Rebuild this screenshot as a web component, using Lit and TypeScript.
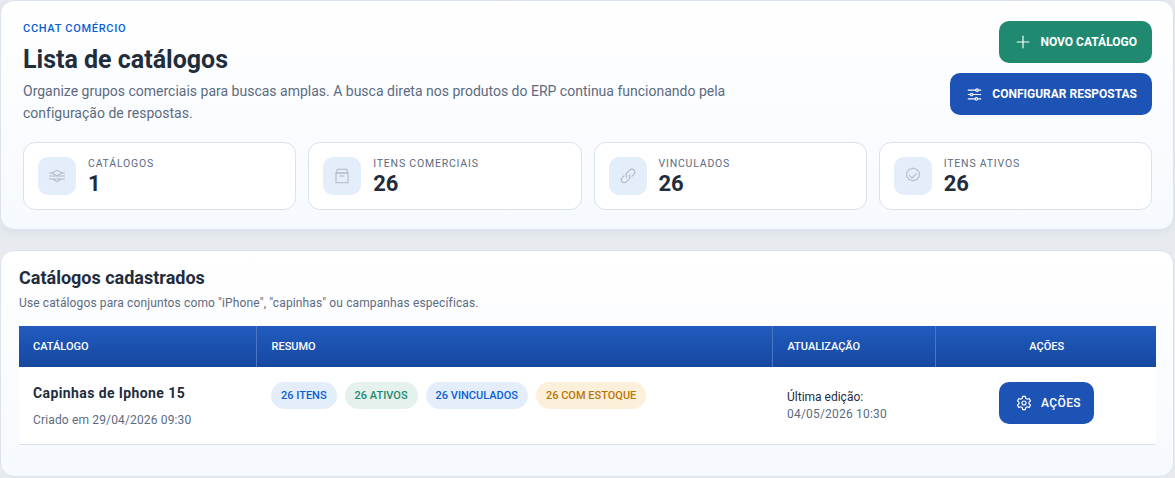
import { LitElement, html, css, svg } from "lit";
import { customElement } from "lit/decorators.js";

const ic = (size: number, w: number, body: unknown) => html`<svg width=${size} height=${size} viewBox="0 0 24 24" fill="none" stroke="currentColor" stroke-width=${w} stroke-linecap="round" stroke-linejoin="round">${body}</svg>`;

const plus = svg`<path d="M12 2v20M2 12h20"/>`;
const sliders = svg`<path d="M2 5h12M18 5h4M2 12h3M10 12h12M2 19h11M17 19h5"/><circle cx="16" cy="5" r="2"/><circle cx="7.500" cy="12" r="2"/><circle cx="15" cy="19" r="2"/>`;
const layers = svg`<path d="M12 4.500 5 8l7 3.500L19 8l-7-3.500Z"/><path d="M2 8h3M19 8h3M2 12h20M2 16h20M6 16l6 3.500 6-3.500"/>`;
const box = svg`<path d="M4 8h16v13H4z"/><path d="M6 3h12l2 5H4z"/><path d="M9.500 12h5"/>`;
const link = svg`<path d="M10.500 13.500a4 4 0 0 1 0-5.600l3.700-3.700a4 4 0 0 1 5.700 5.700l-2.400 2.300"/><path d="M13.500 10.500a4 4 0 0 1 0 5.600l-3.700 3.700a4 4 0 0 1-5.700-5.700l2.400-2.300"/>`;
const check = svg`<path d="M12 1.500c1 0 1.500 1 2.400 1.200 1 .2 2-.2 2.800.4.800.6.700 1.600 1.300 2.300.6.800 1.700 1 2 2 .3.900-.4 1.700-.4 2.600s.700 1.700.4 2.600c-.3 1-1.400 1.200-2 2-.6.700-.5 1.700-1.300 2.300-.8.600-1.800.2-2.800.4-.9.200-1.400 1.200-2.400 1.200s-1.500-1-2.400-1.200c-1-.2-2 .2-2.800-.4-.8-.6-.7-1.600-1.300-2.300-.6-.8-1.700-1-2-2-.3-.9.4-1.700.4-2.600s-.7-1.700-.4-2.600c.3-1 1.400-1.200 2-2 .6-.7.500-1.700 1.300-2.300.8-.6 1.800-.2 2.800-.4C10.500 2.500 11 1.500 12 1.500Z"/><path d="m7.500 11.500 3.200 3.200 5.800-5.800"/>`;
const gear = svg`<circle cx="12" cy="12" r="3"/><path d="M10 2h4l.6 3 2.300 1.300 2.900-1 2 3.500-2.300 2v2.400l2.300 2-2 3.500-2.900-1-2.300 1.300-.6 3h-4l-.6-3-2.300-1.300-2.900 1-2-3.500 2.300-2v-2.400l-2.300-2 2-3.500 2.900 1 2.300-1.300z"/>`;

@customElement("app-root")
export class AppRoot extends LitElement {
  static styles = css`
    :host { display: block; width: 1175px; height: 478px; overflow: hidden; background: #e7ebf0; font-family: Roboto, "Liberation Sans", sans-serif; color: #1f2d3d; text-rendering: optimizeSpeed; }
    * { box-sizing: border-box; }
    .page { display: flex; flex-direction: column; gap: 20px; width: 1174px; }
    .card { background: linear-gradient(180deg, #ffffff 0%, #f6f9fe 100%); border: 1px solid #dbe3ee; border-radius: 14px; }
    .hero { height: 230px; padding: 20px 21px 20px 22px; box-shadow: 0 2px 8px rgba(31,45,61,.06); }
    .top { display: flex; justify-content: space-between; height: 121px; }
    .eyebrow { margin-top: 1px; font-size: 11px; line-height: 14px; font-weight: 500; letter-spacing: .7px; color: #0b5ed7; }
    h1 { margin: 9px 0 0; font-size: 25px; line-height: 30px; font-weight: 700; color: #1f2d3d; }
    .desc { margin: 5px 0 0; width: 720px; font-size: 14px; line-height: 22px; color: #5c6b80; }
    .actions { display: flex; flex-direction: column; align-items: flex-end; gap: 10px; }
    .btn { display: inline-flex; align-items: center; justify-content: center; height: 42px; padding: 0 15px 0 18px; gap: 10px; border: 0; border-radius: 10px; color: #fff; font: 700 12px Roboto, sans-serif; text-rendering: optimizeSpeed; }
    .green { background: #1f8a70; padding-left: 17px; }
    .blue { background: #1d53b5; padding-left: 17px; }
    .stats { display: grid; grid-template-columns: repeat(4, 1fr); gap: 12px; }
    .stat { display: flex; align-items: flex-start; gap: 12px; height: 68px; padding: 14px; background: #fff; border: 1px solid #d9e2ed; border-radius: 12px; }
    .ico { display: flex; align-items: center; justify-content: center; width: 38px; height: 38px; border-radius: 10px; background: #e4edfa; color: #b4b8c7; }
    .label { font-size: 10.500px; line-height: 13px; letter-spacing: .8px; color: #5c6b80; }
    .value { margin-top: 2px; font-size: 22px; line-height: 24px; font-weight: 700; color: #1f2d3d; }
    .list { height: 227px; padding: 15px 18px 0; }
    h2 { margin: 0; font-size: 18px; line-height: 24px; font-weight: 700; color: #1f2d3d; }
    .sub { margin: 5px 0 0; font-size: 12px; line-height: 16px; letter-spacing: .125px; color: #5c6b80; }
    table { width: 1137px; margin-top: 15px; border-collapse: collapse; table-layout: fixed; background: #fff; }
    th { height: 41px; padding: 0 14px; text-align: left; font-size: 11px; font-weight: 500; color: #fff; background: linear-gradient(180deg, #215cbf 0%, #15479f 100%); border-right: 1px solid #4a76c4; }
    th:last-child { border-right: 0; text-align: center; }
    td { height: 77px; padding: 0 14px; border-bottom: 1px solid #d9e2ed; vertical-align: top; }
    th:nth-child(2), th:nth-child(3), td:nth-child(2), td:nth-child(3) { padding-left: 15px; }
    th:last-child, td:last-child { padding-left: 16px; }
    .name { margin-top: 16px; font-size: 14px; line-height: 20px; font-weight: 700; letter-spacing: .4px; color: #1f2d3d; }
    .created { margin-top: 9px; font-size: 12px; line-height: 16px; letter-spacing: .15px; color: #5c6b80; }
    .pills { display: flex; gap: 8px; margin-top: 15px; }
    .pill { display: inline-flex; align-items: center; height: 27px; padding: 0 10px; border-radius: 14px; font-size: 11px; font-weight: 500; }
    .p-blue { background: #e4edfa; color: #0b5ed7; }
    .p-green { background: #e4f1ed; color: #1f8a70; }
    .p-amber { background: #fdf0da; color: #b97506; }
    .edit { margin-top: 22px; font-size: 12px; line-height: 16px; color: #1f2d3d; }
    .date { margin-top: 1px; font-size: 12px; line-height: 16px; letter-spacing: .2px; color: #5c6b80; }
    .cell-act { text-align: center; }
    .act { margin-top: 15px; height: 42px; padding: 0 13px 0 17px; gap: 9px; background: #1d53b5; font-weight: 500; font-size: 12px; letter-spacing: .4px; }
  `;

  render() {
    const stats: [unknown, string, string][] = [
      [layers, "CATÁLOGOS", "1"],
      [box, "ITENS COMERCIAIS", "26"],
      [link, "VINCULADOS", "26"],
      [check, "ITENS ATIVOS", "26"],
    ];
    return html`<div class="page">
      <section class="card hero">
        <div class="top">
          <div>
            <div class="eyebrow">CCHAT COMÉRCIO</div>
            <h1>Lista de catálogos</h1>
            <p class="desc">Organize grupos comerciais para buscas amplas. A busca direta nos produtos do ERP continua funcionando pela configuração de respostas.</p>
          </div>
          <div class="actions">
            <button class="btn green">${ic(14, 2, plus)}NOVO CATÁLOGO</button>
            <button class="btn blue">${ic(15, 1.800, sliders)}CONFIGURAR RESPOSTAS</button>
          </div>
        </div>
        <div class="stats">
          ${stats.map(([i, l, v]) => html`<div class="stat">
            <div class="ico">${ic(18, 1.400, i)}</div>
            <div><div class="label">${l}</div><div class="value">${v}</div></div>
          </div>`)}
        </div>
      </section>
      <section class="card list">
        <h2>Catálogos cadastrados</h2>
        <p class="sub">Use catálogos para conjuntos como "iPhone", "capinhas" ou campanhas específicas.</p>
        <table>
          <colgroup><col style="width:237px"><col style="width:516px"><col style="width:163px"><col style="width:221px"></colgroup>
          <thead><tr><th>CATÁLOGO</th><th>RESUMO</th><th>ATUALIZAÇÃO</th><th>AÇÕES</th></tr></thead>
          <tbody><tr>
            <td><div class="name">Capinhas de Iphone 15</div><div class="created">Criado em 29/04/2026 09:30</div></td>
            <td><div class="pills">
              <span class="pill p-blue">26 ITENS</span>
              <span class="pill p-green">26 ATIVOS</span>
              <span class="pill p-blue">26 VINCULADOS</span>
              <span class="pill p-amber">26 COM ESTOQUE</span>
            </div></td>
            <td><div class="edit">Última edição:</div><div class="date">04/05/2026 10:30</div></td>
            <td class="cell-act"><button class="btn act">${ic(16, 1.700, gear)}AÇÕES</button></td>
          </tr></tbody>
        </table>
      </section>
    </div>`;
  }
}
